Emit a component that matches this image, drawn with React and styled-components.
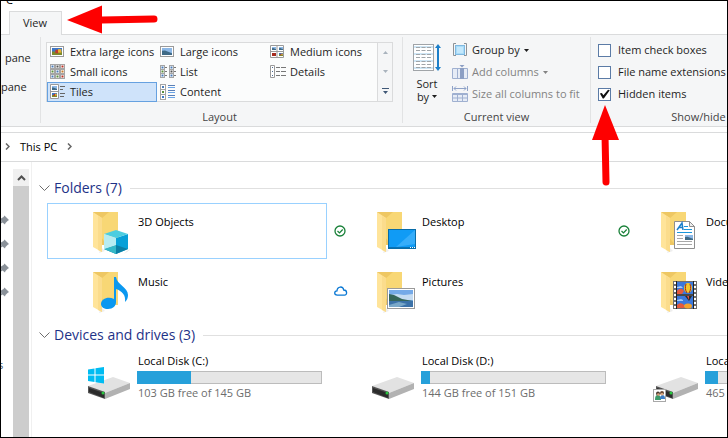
import React, {useState} from 'react';
import styled, {createGlobalStyle} from 'styled-components';

const galleryItems = [
    {label: 'Extra large icons', icon: 'xl'},
    {label: 'Large icons', icon: 'large'},
    {label: 'Medium icons', icon: 'medium'},
    {label: 'Small icons', icon: 'small'},
    {label: 'List', icon: 'list'},
    {label: 'Details', icon: 'details'},
    {label: 'Tiles', icon: 'tiles'},
    {label: 'Content', icon: 'content'},
];

const folders = [
    {name: '3D Objects', art: 'cube'},
    {name: 'Desktop', art: 'desktop', status: 'synced'},
    {name: 'Documents', art: 'document', status: 'synced'},
    {name: 'Music', art: 'music'},
    {name: 'Pictures', art: 'picture', status: 'cloud'},
    {name: 'Videos', art: 'video'},
];

const drives = [
    {name: 'Local Disk (C:)', free: '103 GB free of 145 GB', used: 29, badge: 'windows'},
    {name: 'Local Disk (D:)', free: '144 GB free of 151 GB', used: 5},
    {name: 'Local Disk (E:)', free: '465 GB free of 500 GB', used: 7, badge: 'shared'},
];

const Photo = ({x, y, w, h, warm}) => (
    <>
        <rect x={x} y={y} width={w} height={h} fill={warm ? '#3c78c8' : '#8db8e6'} />
        {warm
            ? <>
                <rect x={x} y={y + h / 2} width={w} height={h / 2} fill="#7c8a2c" />
                <rect x={x + w / 3} y={y + h / 4} width={w / 3} height={h / 2} fill="#c0392b" />
                <rect x={x + w * 0.6} y={y + h / 6} width={w / 3} height={h / 2} fill="#e8b030" />
            </>
            : <path d={`M${x} ${y + h * 0.4}L${x + w * 0.3} ${y + h * 0.35}L${x + w} ${y + h * 0.75}V${y + h}H${x}Z`} fill="#3f6a86" />}
    </>
);

const Cells = ({cells, size}) => cells.map(([x, y, color], i) => (
    <g key={i}>
        <rect x={x + 0.5} y={y + 0.5} width={size - 1} height={size - 1} fill="#fff" stroke="#a5a5a5" />
        <rect x={x + size / 2 - 1} y={y + size / 2 - 1} width="2" height="2" fill={color} />
    </g>
));

const GalleryIcon = ({type}) => (
    <svg width="16" height="16" viewBox="0 0 16 16" aria-hidden="true">
        {(type === 'xl' || type === 'large') && (
            <>
                <rect x="0.5" y="2.5" width="13" height="10" fill="#fff" stroke="#9a9a9a" />
                <Photo x={2} y={4} w={10} h={7} warm={type === 'xl'} />
            </>
        )}
        {type === 'medium' && (
            <>
                <path d="M0.5 1.5h13v12H0.5zM7 1.5v12M0.5 7.5h13" fill="#fff" stroke="#9a9a9a" />
                <Photo x={2} y={3} w={4} h={3} />
                <Photo x={9} y={3} w={4} h={3} />
                <rect x="2" y="9" width="4" height="3" fill="#a62b1f" />
                <Photo x={9} y={9} w={4} h={3} warm />
            </>
        )}
        {type === 'small' && (
            <Cells size={5} cells={[
                [0, 0, '#4a7cb8'], [5, 0, '#555'], [10, 0, '#b83225'],
                [0, 5, '#5b8f3c'], [5, 5, '#4a7cb8'], [10, 5, '#c77b2b'],
                [0, 10, '#4a7cb8'], [5, 10, '#5b8f3c'], [10, 10, '#b83225'],
            ]} />
        )}
        {type === 'list' && (
            <>
                <Cells size={5} cells={[
                    [0, 1, '#4a7cb8'], [0, 5, '#5b8f3c'], [0, 9, '#4a7cb8'],
                    [9, 1, '#4a7cb8'], [9, 5, '#555'], [9, 9, '#4a7cb8'],
                ]} />
                <path d="M5 3.5h2M5 7.5h2M5 11.5h2M14 3.5h2M14 7.5h2M14 11.5h2" stroke="#777" />
            </>
        )}
        {type === 'details' && (
            <>
                <path d="M0.5 1.5h4v12h-4z" fill="#fff" stroke="#9a9a9a" />
                <path d="M2 3.5h1M2 7.5h1M2 11.5h1" stroke="#4a6c94" />
                <path d="M6 3.5h4M11 3.5h5M6 7.5h4M11 7.5h5M6 11.5h4M11 11.5h5" stroke="#777" />
            </>
        )}
        {type === 'tiles' && (
            <>
                <path d="M0.5 0.5h8v14h-8zM0.5 7.5h8" fill="#fff" stroke="#9a9a9a" />
                <Photo x={2} y={2} w={5} h={4} />
                <Photo x={2} y={9} w={5} h={4} warm />
                <path d="M10 2.5h5M10 5.5h3M10 9.5h5M10 12.5h4" stroke="#666" />
            </>
        )}
        {type === 'content' && (
            <>
                <Cells size={6} cells={[[0, 0, '#4a7cb8'], [0, 5, '#5b8f3c'], [0, 10, '#3c78c8']]} />
                <path d="M8 1.5h7M8 6.5h7M8 11.5h7" stroke="#5b7fb5" />
                <path d="M8 3.5h7M8 8.5h7M8 13.5h7" stroke="#6aa5e8" />
            </>
        )}
    </svg>
);

const SortIcon = () => (
    <svg width="28" height="28" viewBox="0 0 28 28" aria-hidden="true">
        <rect x="0.5" y="0.5" width="20" height="26" fill="#fff" stroke="#a0a4a8" />
        <path d="M1 3h19M1 10h19M1 17h19M1 24h19" stroke="#cfe6f5" strokeWidth="2" />
        <path d="M3 3.5h15M3 6.5h15M3 10.5h15M3 13.5h15M3 17.5h15M3 20.5h15M3 23.5h15" stroke="#a0a5a9" strokeDasharray="4 1.5" />
        <path d="M25 3v21" stroke="#1c7fc9" strokeWidth="2" />
        <path d="M22 4l3-4 3 4zM22 23l3 4 3-4z" fill="#1c7fc9" />
    </svg>
);

const GroupByIcon = () => (
    <svg width="16" height="16" viewBox="0 0 16 16" aria-hidden="true">
        <path d="M4 1.5H1.5v12H4M12 1.5h2.5v12H12" fill="none" stroke="#8d9296" />
        <rect x="3.5" y="3.5" width="9" height="9" fill="#a9dcf8" stroke="#7fb8e0" />
        <rect x="5" y="5" width="6" height="6" fill="#c4e8fc" />
    </svg>
);

const AddColumnsIcon = () => (
    <svg width="16" height="16" viewBox="0 0 16 16" aria-hidden="true">
        <path d="M0.5 4.5h15v10H0.5z" fill="#e6ecf6" stroke="#9fb0d0" />
        <path d="M5.5 4v11" stroke="#9fb0d0" />
        <path d="M8 4h4v11H8z" fill="#8c9fc4" />
        <path d="M7.5 1h5l-2.5 2.5z" fill="#8c9fc4" />
    </svg>
);

const SizeColumnsIcon = () => (
    <svg width="16" height="16" viewBox="0 0 16 16" aria-hidden="true">
        <path d="M0.5 0v5M15.5 0v5M2 2.5h12M4 0.5l-2 2 2 2M12 0.5l2 2-2 2" fill="none" stroke="#8fa3c8" />
        <path d="M0.5 7.5h15v8H0.5z" fill="#e6ecf6" stroke="#9fb0d0" />
        <path d="M0 8.5h16M5.5 8v8M10.5 8v8M0 12h16" stroke="#9fb0d0" />
    </svg>
);

const Pin = () => (
    <svg width="10" height="10" viewBox="0 0 10 10" aria-hidden="true">
        <path d="M5.5 0.5L10 5 8.5 6 6.5 8 6 9.5 3.5 7.5 0 10 2.5 6 0.5 4 2 3.5 4.5 2Z" fill="#8a9199" />
    </svg>
);

const StatusIcon = ({type}) => (
    type === 'synced'
        ? (
            <svg width="12" height="12" viewBox="0 0 12 12" role="img" aria-label="Synced">
                <circle cx="6" cy="6" r="5" fill="#fff" stroke="#188038" strokeWidth="1.3" />
                <path d="M3.5 6l2 2 3.2-3.5" fill="none" stroke="#188038" strokeWidth="1.2" />
            </svg>
        )
        : (
            <svg width="14" height="12" viewBox="0 0 14 12" role="img" aria-label="Online only">
                <path d="M3.3 10.2C-.2 10.2 0 6 3 5.8 3.3 1 9 .8 9.7 5 13.5 5 13.4 10.2 10.4 10.2Z" fill="#fff" stroke="#0a78d4" strokeWidth="1.3" />
            </svg>
        )
);

const FolderArt = ({art}) => (
    <Art width="48" height="48" viewBox="0 0 48 48" aria-hidden="true">
        <path d="M14 40l4 4-6 2z" fill="#eeeeee" />
        <path d="M6 5H31V38H14Z" fill="#f8d775" />
        <path d="M6 5H22L14 12V30L20 38H14Z" fill="#eec763" />
        <path d="M6 5L15 11V45L6 40Z" fill="#ffe49a" />
        <path d="M11 9l4 2v34l-4-2z" fill="#fbdc8c" />
        {art === 'cube' && (
            <>
                <path d="M40 44l4-2-7 5z" fill="#ddd" />
                <path d="M17 27L29 31V47L17 42Z" fill="#c8f1f6" />
                <path d="M29 31L41 27V42L29 47Z" fill="#07a0d8" />
                <path d="M17 27L29 23 41 27 29 31Z" fill="#4ccde0" />
                <path d="M17 42L29 38 41 42 29 47Z" fill="#0b7fa5" />
                <path d="M17 42L29 38V47Z" fill="#35b8c8" />
                <path d="M29 31v7l-12 4V27z" fill="#b7ecf2" />
            </>
        )}
        {art === 'music' && (
            <path d="M27 10h2c1 8 12 10 12 18 0 3-1 5-3 7 1-7-3-11-9-13v13c0 4-3 7-8 7-4 0-7-2-7-5 0-5 7-8 13-5z" fill="#0a98f0" />
        )}
        {art === 'desktop' && (
            <>
                <rect x="17.5" y="22.5" width="27" height="19" fill="#109bf5" stroke="#086ca8" />
                <path d="M44 23v14L25 40z" fill="#36adfa" />
                <path d="M18 40.5h26" stroke="#0872b5" />
                <path d="M39 40.5h1M41 40.5h1M43 40.5h1" stroke="#fff" />
            </>
        )}
        {art === 'picture' && (
            <>
                <rect x="16.5" y="21.5" width="27" height="20" fill="#fff" stroke="#9a9a9a" />
                <rect x="18" y="23" width="24" height="17" fill="#75aae8" />
                <path d="M18 28l8-1 7 1 9-1v6H18z" fill="#c5dcf2" />
                <path d="M18 27l5 1 8 4 11 2v2H18z" fill="#36665a" />
                <path d="M18 34h24v6H18z" fill="#3c72a8" />
                <path d="M18 38l10-3 8 2-8 3H18z" fill="#7aa8c8" />
            </>
        )}
        {art === 'document' && (
            <>
                <path d="M19.5 14.5h15l5 5v22h-20z" fill="#fff" stroke="#8e8e8e" />
                <path d="M34.5 14.5v5h5z" fill="#eee" stroke="#8e8e8e" />
                <path d="M22 23l5-7 1 7M23.5 20.5h4" fill="none" stroke="#1c7fc9" strokeWidth="1.5" />
                <path d="M29 19.5h4M29 22.5h8M22 25.5h15" stroke="#1996dc" />
                <path d="M22 28.5h6M22 31.5h6M22 34.5h15M22 37.5h15" stroke="#a8a8a8" />
                <Photo x={30} y={28} w={8} h={5} />
            </>
        )}
        {art === 'video' && (
            <>
                <rect x="18" y="14" width="24" height="28" fill="#6f6f6f" />
                <path d="M20 15v27M40 15v27" stroke="#fff" strokeWidth="2" strokeDasharray="2 2" />
                <path d="M22 15h16v12H22zM22 29h16v12H22z" fill="#3b78dc" />
                <path d="M22 24c2-3 5-3 7 0l-2 3h-5zM22 38c3-3 6-2 8 1l-1 2h-7z" fill="#e55a3c" />
                <path d="M22 20l4-1 2 2h-6zM22 33l4-1 2 1v1h-6z" fill="#a8ccf5" />
                <ellipse cx="33" cy="21" rx="4" ry="5" fill="#f3c82c" />
                <path d="M31 17c-1 3-1 6 1 9M35 17c1 3 1 6-1 9" fill="none" stroke="#9c2a20" />
                <path d="M30 29h7l-3 5z" fill="#2b2b2b" />
                <path d="M32 29h2v4z" fill="#e74c3c" />
                <ellipse cx="33" cy="39" rx="4" ry="2.5" fill="#f3a32c" />
                <path d="M22 28h16M21.5 14v28M38.5 14v28" stroke="#222" />
            </>
        )}
    </Art>
);

const DriveArt = ({badge}) => (
    <Art width="48" height="48" viewBox="0 0 48 48" aria-hidden="true">
        <path d="M1 32L26 23 43 29 18 39Z" fill="#e2e2e2" />
        <path d="M18 39L43 29V35L18 45Z" fill="#b2b2b2" />
        <path d="M1 32L18 38V45L1 39Z" fill="#555" />
        <path d="M2 34L17 39V44L2 38Z" fill="#2b2b2b" />
        <circle cx="16" cy="39" r="1.5" fill="#29c840" />
        {badge === 'windows' && (
            <path d="M1 15.5L7.5 14.5V20.500H1ZM8.5 14.3L17 13V20.5H8.5ZM1 21.5H7.5V28L1 27ZM8.5 21.5H17V29.5L8.5 28.2Z" fill="#00bcf2" />
        )}
        {badge === 'shared' && (
            <>
                <rect x="-1.5" y="35.5" width="12" height="12" fill="#fff" stroke="#a8a8a8" />
                <path d="M0 46c0-4 1-5 3-5s3 2 3 5z" fill="#3c9a6a" />
                <path d="M5 45c0-3 1-4 2.5-4S10 42 10 45z" fill="#3a7ec8" />
                <circle cx="3" cy="39.5" r="2" fill="#4a3a30" />
                <circle cx="7" cy="39" r="2" fill="#6b4a35" />
                <circle cx="3.3" cy="40.5" r="1.3" fill="#d8a27c" />
                <circle cx="7" cy="40.2" r="1.3" fill="#e0ae88" />
            </>
        )}
    </Art>
);

const Chevron = () => (
    <svg width="11" height="7" viewBox="0 0 11 7" aria-hidden="true">
        <path d="M0.5 0.5l5 5 5-5" fill="none" stroke="#6d6d6d" />
    </svg>
);

const Caret = () => (
    <svg width="5" height="3" viewBox="0 0 5 3" aria-hidden="true">
        <path d="M0 0h5L2.5 3z" fill="currentColor" />
    </svg>
);

const CrumbArrow = () => (
    <svg width="5" height="7" viewBox="0 0 5 7" aria-hidden="true">
        <path d="M1 0.5l3 3-3 3" fill="none" stroke="#666" strokeWidth="1.5" />
    </svg>
);

const Section = ({title, children}) => {
    const [open, setOpen] = useState(true);
    return (
        <section>
            <SectionHeader>
                <SectionToggle type="button" aria-expanded={open} onClick={() => setOpen(!open)}>
                    <Chevron />
                    {title}
                </SectionToggle>
                <SectionRule />
            </SectionHeader>
            {open && <TileGrid>{children}</TileGrid>}
        </section>
    );
};

const App = () => {
    const [view, setView] = useState('Tiles');
    const [checks, setChecks] = useState({
        'Item check boxes': false,
        'File name extensions': false,
        'Hidden items': true,
    });

    return (
        <Window>
            <GlobalStyle />
            <TitleBar><span>C</span></TitleBar>
            <TabStrip role="tablist">
                <Tab type="button" role="tab" aria-selected="true">View</Tab>
            </TabStrip>
            <Ribbon>
                <PaneGroup>
                    <PaneButton type="button" $inset>pane</PaneButton>
                    <PaneButton type="button">pane</PaneButton>
                </PaneGroup>
                <LayoutGroup>
                    <GalleryBox>
                        <Gallery>
                            {galleryItems.map(item => (
                                <GalleryItem
                                    key={item.label}
                                    type="button"
                                    $active={view === item.label}
                                    onClick={() => setView(item.label)}
                                >
                                    <GalleryIcon type={item.icon} />
                                    <Caption>{item.label}</Caption>
                                </GalleryItem>
                            ))}
                        </Gallery>
                        <GalleryScroll>
                            <ScrollButton type="button" aria-label="Scroll up" disabled>
                                <svg width="5" height="3" viewBox="0 0 5 3"><path d="M0 3h5L2.5 0z" fill="#a9b3bd" /></svg>
                            </ScrollButton>
                            <ScrollButton type="button" aria-label="Scroll down" disabled>
                                <svg width="5" height="3" viewBox="0 0 5 3"><path d="M0 0h5L2.5 3z" fill="#a9b3bd" /></svg>
                            </ScrollButton>
                            <ScrollButton type="button" aria-label="More">
                                <svg width="7" height="6" viewBox="0 0 7 6"><path d="M0 0h7v1H0zM1 3h5L3.5 6z" fill="#3f5877" /></svg>
                            </ScrollButton>
                        </GalleryScroll>
                    </GalleryBox>
                    <GroupLabel>Layout</GroupLabel>
                </LayoutGroup>
                <CurrentViewGroup>
                    <GroupBody>
                        <SortButton type="button">
                            <SortIcon />
                            <span>Sort</span>
                            <SortCaption>by <Caret /></SortCaption>
                        </SortButton>
                        <Commands>
                            <Command type="button"><GroupByIcon /><Caption>Group by</Caption><Caret /></Command>
                            <Command type="button" disabled><AddColumnsIcon /><Caption>Add columns</Caption><Caret /></Command>
                            <Command type="button" disabled><SizeColumnsIcon /><Caption>Size all columns to fit</Caption></Command>
                        </Commands>
                    </GroupBody>
                    <GroupLabel>Current view</GroupLabel>
                </CurrentViewGroup>
                <ShowGroup>
                    <Commands>
                        {Object.keys(checks).map(label => (
                            <CheckLabel key={label}>
                                <CheckBox
                                    type="checkbox"
                                    checked={checks[label]}
                                    onChange={() => setChecks({...checks, [label]: !checks[label]})}
                                />
                                <Caption>{label}</Caption>
                            </CheckLabel>
                        ))}
                    </Commands>
                    <GroupLabel>Show/hide</GroupLabel>
                </ShowGroup>
            </Ribbon>
            <AddressBar aria-label="Address">
                <CrumbArrow />
                <a href="#this-pc">This PC</a>
                <CrumbArrow />
            </AddressBar>
            <Body>
                <Sidebar>
                    <PinList>
                        <Pin />
                        <Pin />
                        <Pin />
                        <Pin />
                        <span>s</span>
                    </PinList>
                    <ScrollTrack>
                        <ScrollUp type="button" aria-label="Scroll up">
                            <svg width="9" height="6" viewBox="0 0 9 6"><path d="M1 5l3.5-3.5L8 5" fill="none" stroke="#505050" strokeWidth="2" /></svg>
                        </ScrollUp>
                        <ScrollThumb />
                    </ScrollTrack>
                </Sidebar>
                <Content>
                    <Section title="Folders (7)">
                        {folders.map((folder, i) => (
                            <Tile key={folder.name} href="#folder" $selected={i === 0}>
                                <StatusCell>{folder.status && <StatusIcon type={folder.status} />}</StatusCell>
                                <FolderArt art={folder.art} />
                                <FolderName>{folder.name}</FolderName>
                            </Tile>
                        ))}
                    </Section>
                    <Section title="Devices and drives (3)">
                        {drives.map(drive => (
                            <Tile key={drive.name} href="#drive">
                                <StatusCell />
                                <DriveArt badge={drive.badge} />
                                <DriveInfo>
                                    <DriveName>{drive.name}</DriveName>
                                    <Meter role="meter" aria-label={drive.name} aria-valuenow={drive.used}>
                                        <MeterFill style={{width: `${drive.used}%`}} />
                                    </Meter>
                                    <DriveFree>{drive.free}</DriveFree>
                                </DriveInfo>
                            </Tile>
                        ))}
                    </Section>
                </Content>
            </Body>
            <TabArrow width="94" height="30" viewBox="0 0 94 30" aria-hidden="true">
                <path d="M36 15L88 14" stroke="#fe0000" strokeWidth="7" strokeLinecap="round" />
                <path d="M1 15L36 0.5V28.5Z" fill="#fe0000" />
            </TabArrow>
            <HiddenArrow width="30" height="82" viewBox="0 0 30 82" aria-hidden="true">
                <path d="M15 30L16 77" stroke="#fe0000" strokeWidth="7" strokeLinecap="round" />
                <path d="M15 0L29 35H2Z" fill="#fe0000" />
            </HiddenArrow>
        </Window>
    );
};

export default App;

const GlobalStyle = createGlobalStyle`
  * {
    box-sizing: border-box;
  }

  body {
    margin: 0;
    font-family: 'Open Sans', 'Noto Sans', sans-serif;
    font-size: 11px;
    line-height: 15px;
    color: #1e1e1e;
  }

  button {
    font: inherit;
    color: inherit;
    background: none;
    border: 0;
    padding: 0;
    margin: 0;
    text-align: left;
  }

  a {
    color: inherit;
    text-decoration: none;
  }

  svg {
    display: block;
    flex-shrink: 0;
  }
`

const Window = styled.div`
  position: relative;
  display: flex;
  flex-direction: column;
  height: 100vh;
  border: 1px solid #000000;
  background-color: #ffffff;
  overflow: hidden;
`

const TitleBar = styled.div`
  display: flex;
  align-items: flex-end;
  flex-shrink: 0;
  height: 6px;
  padding-left: 5px;
  overflow: hidden;
  color: #000000;
`

const TabStrip = styled.div`
  display: flex;
  align-items: flex-end;
  flex-shrink: 0;
  height: 27px;
  padding-left: 8px;
`

const Tab = styled.button`
  position: relative;
  z-index: 1;
  height: 24px;
  margin-bottom: -1px;
  padding: 0 14px 2px 13px;
  border: 1px solid #dadbdc;
  border-bottom: 0;
  background-color: #f5f6f7;
`

const Ribbon = styled.div`
  display: flex;
  flex-shrink: 0;
  padding: 2px 0 3px;
  border-top: 1px solid #dadbdc;
  border-bottom: 1px solid #dadbdc;
  background-color: #f5f6f7;
  overflow: hidden;
  white-space: nowrap;
`

const Group = styled.div`
  display: flex;
  flex-direction: column;
  justify-content: space-between;
  flex-shrink: 0;
  height: 86px;
  border-right: 1px solid #e2e3e4;
`

const PaneGroup = styled(Group)`
  justify-content: flex-start;
  width: 40px;
  padding-top: 6px;
`

const PaneButton = styled.button`
  height: 29px;
  padding-left: ${props => props.$inset ? '4px' : '0'};
`

const LayoutGroup = styled(Group)`
  padding: 5px 9px 0 5px;
`

const CurrentViewGroup = styled(Group)`
  min-width: 188px;
  padding: 2px 8px 0;
`

const ShowGroup = styled(Group)`
  min-width: 216px;
  padding: 2px 7px 0;
`

const GroupLabel = styled.div`
  line-height: 13px;
  text-align: center;
  color: #444444;
`

const GroupBody = styled.div`
  display: flex;
  gap: 9px;
`

const Caption = styled.span`
  padding-bottom: 2px;
`

const GalleryBox = styled.div`
  display: flex;
`

const Gallery = styled.div`
  display: grid;
  grid-template-columns: repeat(3, 110px);
  grid-auto-rows: 20px;
  padding: 0 1px;
  background-color: #fbfcfc;
  box-shadow: inset 0 0 0 1px #dadbdc;
`

const GalleryItem = styled.button`
  display: flex;
  align-items: center;
  gap: 4px;
  padding-left: 2px;
  border: 1px solid ${props => props.$active ? '#66a1e0' : 'transparent'};
  background-color: ${props => props.$active ? '#cfe3fa' : 'transparent'};
`

const GalleryScroll = styled.div`
  display: grid;
  grid-template-rows: repeat(3, 1fr);
  width: 15px;
  border: 1px solid #dadbdc;
  border-left: 0;
`

const ScrollButton = styled.button`
  display: flex;
  align-items: center;
  justify-content: center;
`

const SortButton = styled.button`
  display: flex;
  flex-direction: column;
  align-items: center;
  width: 32px;
  padding-top: 5px;
  line-height: 13px;

  svg + span {
    margin-top: 5px;
  }
`

const SortCaption = styled.span`
  display: flex;
  align-items: center;
  gap: 3px;
`

const Commands = styled.div`
  display: flex;
  flex-direction: column;
`

const Command = styled.button`
  display: flex;
  align-items: center;
  gap: 4px;
  height: 22px;
  color: ${props => props.disabled ? '#838383' : 'inherit'};
`

const CheckLabel = styled.label`
  display: flex;
  align-items: center;
  gap: 7px;
  height: 22px;
`

const CheckBox = styled.input`
  appearance: none;
  width: 13px;
  height: 13px;
  margin: 0;
  border: 1px solid #5b7ba6;
  background-color: #ffffff;

  &:checked::before {
    content: '';
    display: block;
    height: 100%;
    background-color: #111111;
    clip-path: polygon(8% 45%, 26% 40%, 40% 62%, 82% 12%, 98% 16%, 44% 92%, 34% 92%);
  }
`

const AddressBar = styled.nav`
  display: flex;
  align-items: center;
  flex-shrink: 0;
  gap: 10px;
  height: 30px;
  margin-top: 5px;
  padding: 0 0 2px 4px;
  border-top: 1px solid #dadbdc;
  border-bottom: 1px solid #dadbdc;
  color: #000000;
`

const Body = styled.div`
  display: flex;
  flex: 1;
  min-height: 0;
`

const Sidebar = styled.aside`
  display: flex;
  flex-shrink: 0;
  width: 31px;
  padding-top: 7px;
  border-right: 1px solid #f0f0f0;
`

const PinList = styled.div`
  display: flex;
  flex-direction: column;
  gap: 14px;
  width: 12px;
  padding-top: 46px;
  overflow: hidden;

  svg {
    margin-left: -2px;
  }

  span {
    margin: 46px 0 0 -3px;
    color: #3c5a78;
  }
`

const ScrollTrack = styled.div`
  display: flex;
  flex-direction: column;
  width: 16px;
`

const ScrollUp = styled.button`
  display: flex;
  align-items: center;
  justify-content: center;
  height: 17px;
  background-color: #f0f0f0;
`

const ScrollThumb = styled.div`
  flex: 1;
  background-color: #cdcdcd;
`

const Content = styled.main`
  flex: 1;
  min-width: 0;
  padding: 10px 0 0 7px;
  overflow: hidden;
  color: #000000;
`

const SectionHeader = styled.div`
  display: flex;
  align-items: center;
  gap: 8px;
  height: 24px;
  margin: 4px 0 3px;
`

const SectionToggle = styled.button`
  display: flex;
  align-items: center;
  gap: 4px;
  font-size: 14px;
  line-height: 20px;
  color: #1e3287;
  white-space: nowrap;
`

const SectionRule = styled.div`
  flex: 1;
  height: 1px;
  background-color: #e0e0e0;
`

const TileGrid = styled.div`
  display: grid;
  grid-template-columns: repeat(3, 280px);
  grid-auto-rows: 56px;
  gap: 4px;
  padding-left: 8px;
`

const Tile = styled.a`
  display: grid;
  grid-template-columns: 39px 48px 1fr;
  border: 1px solid ${props => props.$selected ? '#99d1ff' : 'transparent'};
`

const StatusCell = styled.span`
  display: flex;
  align-items: center;
  padding-left: 2px;
`

const Art = styled.svg`
  align-self: center;
  overflow: visible;
`

const FolderName = styled.span`
  padding: 10px 0 0 3px;
`

const DriveInfo = styled.span`
  display: flex;
  flex-direction: column;
  padding: 2px 4px 0 2px;
`

const DriveName = styled.span`
  padding-left: 1px;
`

const Meter = styled.span`
  display: block;
  height: 13px;
  margin: 3px 0 1px;
  background-color: #e6e6e6;
  box-shadow: inset 0 0 0 1px #bcbcbc;
`

const MeterFill = styled.span`
  display: block;
  height: 100%;
  background-color: #26a0da;
`

const DriveFree = styled.span`
  padding-left: 1px;
  color: #6d6d6d;
`

const TabArrow = styled.svg`
  position: absolute;
  top: 4px;
  left: 65px;
  z-index: 2;
`

const HiddenArrow = styled.svg`
  position: absolute;
  top: 104px;
  left: 589px;
  z-index: 2;
`
